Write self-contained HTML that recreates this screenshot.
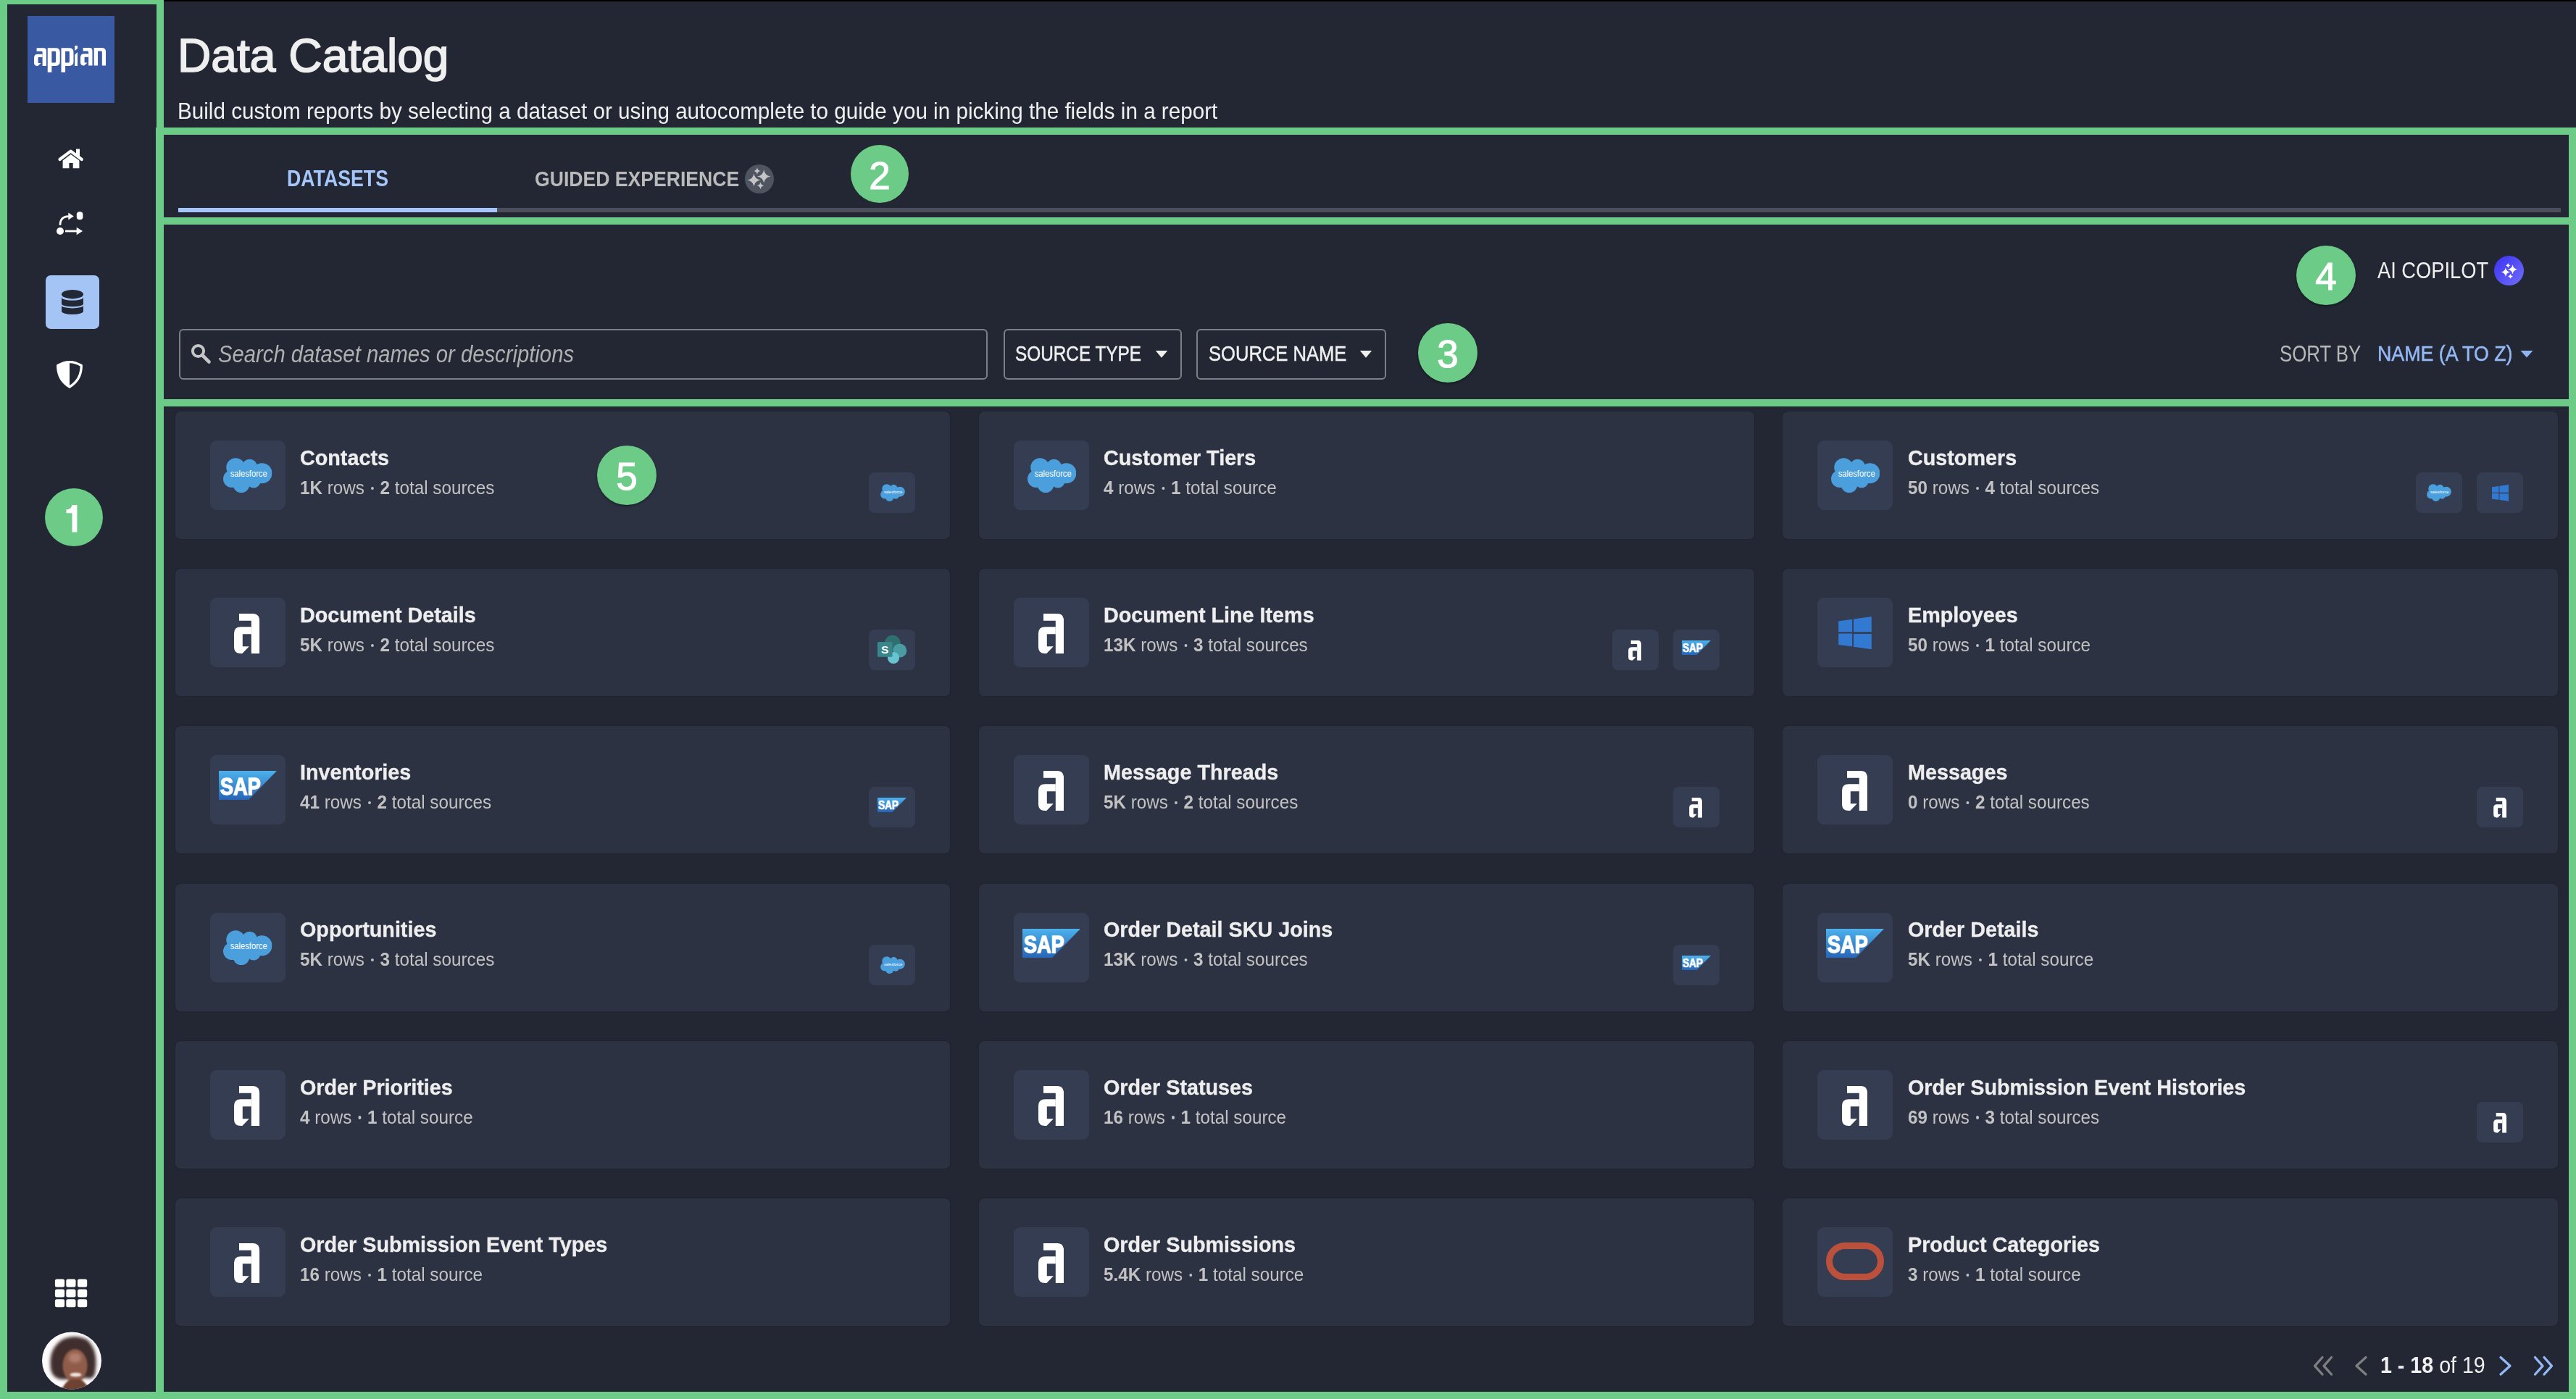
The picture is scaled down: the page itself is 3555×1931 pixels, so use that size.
<!DOCTYPE html>
<html><head><meta charset="utf-8">
<style>
*{margin:0;padding:0;box-sizing:border-box}
html,body{width:3555px;height:1931px;overflow:hidden;background:#222733;font-family:"Liberation Sans",sans-serif}
.a{position:absolute}
.g{position:absolute;background:#6ccb86}
.circ{position:absolute;border-radius:50%;background:#6ccb86;color:#fff;font-size:53px;text-align:center;box-shadow:0 2px 3px rgba(0,0,0,.35);-webkit-text-stroke:1.1px #fff}
.card{position:absolute;width:1069.8px;height:176px;background:#2d3243;border-radius:7px;box-shadow:0 0 1.5px rgba(0,0,0,.4)}
.ib{position:absolute;left:48px;top:40px;width:104px;height:96px;background:#343d52;border-radius:9px}
.mb{position:absolute;top:84px;width:64px;height:56px;background:#343d52;border-radius:8px}
.ct{position:absolute;left:172.3px;top:48.74px;font-size:30.2px;font-weight:700;color:#eeeeee;white-space:nowrap;line-height:1;transform:scaleX(0.952);transform-origin:0 0;-webkit-text-stroke:0.35px #eeeeee}
.cs{position:absolute;left:172.3px;top:92.74px;font-size:25px;color:#c2c2c2;white-space:nowrap;line-height:1;transform:scaleX(0.97);transform-origin:0 0}
.cs b{font-weight:700}
.dot{display:inline-block;width:4.2px;height:4.2px;border-radius:50%;background:#c2c2c2;margin:0 8.9px 0 9.2px;vertical-align:6px}
.txt{position:absolute;white-space:nowrap;line-height:1}
</style></head><body>

<svg width="0" height="0" style="position:absolute">
<defs>
<linearGradient id="sapg" x1="0" y1="0" x2="0" y2="1"><stop offset="0" stop-color="#4db1ec"/><stop offset="1" stop-color="#2765b6"/></linearGradient>
<symbol id="appa" viewBox="0 0 35.3 54.9">
<path fill="#fff" d="M7,0 L26.3,0 Q35.3,0 35.3,11.2 L35.3,54.9 L23.8,54.9 L23.8,9.7 L7,9.7 Z"/>
<path fill="#fff" d="M23.8,18.2 L9.3,18.2 Q0,18.2 0,27.2 L0,46.2 Q0,54.9 9.3,54.9 L11.3,54.9 L20.8,45.2 L11.8,45.2 L11.8,28.2 L23.8,28.2 Z"/>
</symbol>
<symbol id="sf" viewBox="9 12 67.5 48">
<g fill="#4a9fdc">
<circle cx="26.25" cy="25.25" r="13"/>
<circle cx="45.5" cy="24.2" r="10.5"/>
<circle cx="62.5" cy="33.25" r="14"/>
<circle cx="34" cy="48.5" r="11.5"/>
<circle cx="21" cy="41" r="12"/>
<circle cx="51" cy="44" r="9.5"/>
<rect x="20" y="24" width="40" height="23"/>
</g>
<text x="18.7" y="38" font-family="Liberation Sans" font-size="12.5" fill="#fff" textLength="51" lengthAdjust="spacingAndGlyphs">salesforce</text>
</symbol>
<symbol id="sap" viewBox="0 0 80 40">
<path fill="url(#sapg)" d="M0,0 L80,0 L41,40 L0,40 Z"/>
<text x="1.8" y="32.5" font-family="Liberation Sans" font-weight="700" font-size="34" fill="#fff" stroke="#fff" stroke-width="1.3" textLength="56" lengthAdjust="spacingAndGlyphs">SAP</text>
</symbol>
<symbol id="win" viewBox="0 0 46 46">
<g fill="#3279d2">
<path d="M0,6.4 L19.1,3.8 L19.1,21.5 L0,21.5 Z"/>
<path d="M21,3.5 L46,0 L46,21.5 L21,21.5 Z"/>
<path d="M0,23.7 L19.1,23.7 L19.1,41.6 L0,39.4 Z"/>
<path d="M21,24.3 L46,24.3 L46,45.6 L21,42.1 Z"/>
</g>
</symbol>
<symbol id="ora" viewBox="0 0 80 52">
<rect x="4.5" y="4.5" width="71" height="43" rx="21.5" ry="21.5" fill="none" stroke="#bb513d" stroke-width="9"/>
</symbol>
<symbol id="shp" viewBox="0 0 64 56">
<circle cx="32.7" cy="18.7" r="10.9" fill="#2e6f70"/>
<circle cx="42.7" cy="29" r="9.6" fill="#4a9ba2"/>
<circle cx="34" cy="39" r="8.1" fill="#66c5d0"/>
<rect x="11.9" y="17" width="20.6" height="20.8" rx="1.5" fill="#3a8589"/>
<text x="22.1" y="33.2" text-anchor="middle" font-family="Liberation Sans" font-weight="700" font-size="15.5" fill="#fff">S</text>
</symbol>
</defs></svg>


<!-- top black line -->
<div class="a" style="left:226px;top:0;width:3329px;height:2px;background:#000"></div>

<!-- sidebar -->
<div class="a" style="left:10px;top:6px;width:206px;height:1915px;background:#222733"></div>
<div class="a" style="left:38px;top:22px;width:120px;height:120px;background:#3a59a3"></div>

<div class="a" style="left:63px;top:380px;width:74px;height:74px;background:#a4c4f6;border-radius:7px"></div>
<!-- appian logo text -->
<svg class="a" style="left:47px;top:63px;width:60px;height:37px" viewBox="0 0 1344 828"><g fill="#fff" transform="translate(0,0)">
 <g transform="translate(0,75)"><path d="M80,0 L300,0 Q380,0 380,90 L380,550 L260,550 L260,130 Q260,100 230,100 L80,100 Z"/><path d="M260,185 L110,185 Q0,185 0,300 L0,450 Q0,550 100,550 L120,550 L215,460 L140,460 Q125,460 125,440 L125,300 Q125,285 140,285 L260,285 Z"/></g>
 <g transform="translate(420,75)"><path fill-rule="evenodd" d="M0,0 L250,0 Q380,0 380,130 L380,420 Q380,550 250,550 L125,550 L125,750 L0,750 Z M125,100 L230,100 Q255,100 255,125 L255,425 Q255,450 230,450 L125,450 Z"/></g>
 <g transform="translate(840,75)"><path fill-rule="evenodd" d="M0,0 L250,0 Q380,0 380,130 L380,420 Q380,550 250,550 L125,550 L125,750 L0,750 Z M125,100 L230,100 Q255,100 255,125 L255,425 Q255,450 230,450 L125,450 Z"/></g>
 <g transform="translate(1260,0)"><path d="M0,0 L130,0 L130,55 L0,155 Z"/><path d="M0,280 L130,160 L130,625 L0,625 Z"/></g>
</g></svg>
<svg class="a" style="left:110.8px;top:66.4px;width:35.2px;height:24.6px" viewBox="0 0 790 550"><g fill="#fff">
 <path d="M80,0 L290,0 Q370,0 370,90 L370,550 L250,550 L250,130 Q250,100 220,100 L80,100 Z"/><path d="M250,185 L110,185 Q0,185 0,300 L0,450 Q0,550 100,550 L120,550 L215,460 L140,460 Q125,460 125,440 L125,300 Q125,285 140,285 L250,285 Z"/>
 <path d="M420,0 L660,0 Q790,0 790,130 L790,550 L670,550 L670,125 Q670,100 645,100 L540,100 L540,550 L420,550 Z"/>
</g></svg>
<!-- home -->
<svg class="a" style="left:78px;top:203px;width:40px;height:32px" viewBox="78 203 40 32">
 <path d="M82.5,220 L97.6,208.6 L112.8,220" fill="none" stroke="#fff" stroke-width="4.2" stroke-linecap="round" stroke-linejoin="round"/>
 <rect x="105" y="205.6" width="5" height="9.5" fill="#fff"/>
 <path d="M86.6,221.5 L97.7,213 L109.4,221.5 L109.4,232.3 L100.7,232.3 L100.7,225 L95.4,225 L95.4,232.3 L86.6,232.3 Z" fill="#fff"/>
</svg>
<!-- route -->
<svg class="a" style="left:76px;top:290px;width:42px;height:37px" viewBox="76 290 42 37">
 <circle cx="83" cy="319" r="5" fill="#fff"/>
 <path d="M90,319 L108,319" stroke="#fff" stroke-width="2.8"/>
 <path d="M105.7,313.8 L114,319 L105.7,324.2 Z" fill="#fff"/>
 <rect x="105.8" y="292.2" width="8.6" height="11" rx="4" fill="#fff"/>
 <path d="M83,310.7 Q83,298.6 95,298.6" fill="none" stroke="#fff" stroke-width="2.7"/>
 <path d="M94.3,293.6 L101.8,298.6 L94.3,303.6 Z" fill="#fff"/>
</svg>
<!-- database -->
<svg class="a" style="left:83px;top:398px;width:34px;height:38px" viewBox="83 398 34 38">
 <ellipse cx="100" cy="406.2" rx="15" ry="6.2" fill="#232836"/>
 <path d="M85,410.5 A15,4.3 0 0 0 115,410.5 L115,419.6 A15,3.6 0 0 1 85,419.6 Z" fill="#232836"/>
 <path d="M85,421.8 A15,3.6 0 0 0 115,421.8 L115,429.4 A15,4.6 0 0 1 85,429.4 Z" fill="#232836"/>
</svg>
<!-- shield -->
<svg class="a" style="left:76px;top:496px;width:40px;height:42px" viewBox="76 496 40 42">
 <path d="M79.8,504.5 Q88,499.5 96,499.6 Q104,499.5 112.2,504.5 Q112.5,524 96,534 Q79.5,524 79.8,504.5 Z" fill="none" stroke="#fff" stroke-width="3.4" stroke-linejoin="round"/>
 <path d="M79.8,504.5 Q88,499.5 96,499.6 L96,534 Q79.5,524 79.8,504.5 Z" fill="#fff"/>
</svg>
<!-- grid -->
<svg class="a" style="left:75px;top:1764px;width:46px;height:41px" viewBox="75 1764 46 41"><g fill="#fff">
 <rect x="75.9" y="1765.5" width="13.2" height="11" rx="2.5"/><rect x="91.3" y="1765.5" width="13.2" height="11" rx="2.5"/><rect x="107" y="1765.5" width="13.2" height="11" rx="2.5"/>
 <rect x="75.9" y="1779.6" width="13.2" height="11" rx="2.5"/><rect x="91.3" y="1779.6" width="13.2" height="11" rx="2.5"/><rect x="107" y="1779.6" width="13.2" height="11" rx="2.5"/>
 <rect x="75.9" y="1793.3" width="13.2" height="11" rx="2.5"/><rect x="91.3" y="1793.3" width="13.2" height="11" rx="2.5"/><rect x="107" y="1793.3" width="13.2" height="11" rx="2.5"/>
</g></svg>
<!-- avatar -->
<svg class="a" style="left:58px;top:1837.5px;width:82px;height:80px" viewBox="0 0 82 80">
 <defs><clipPath id="avc"><ellipse cx="41" cy="40" rx="41" ry="39.6"/></clipPath>
 <filter id="avb" x="-30%" y="-30%" width="160%" height="160%"><feGaussianBlur stdDeviation="2"/></filter>
 <filter id="avb2" x="-30%" y="-30%" width="160%" height="160%"><feGaussianBlur stdDeviation="1"/></filter></defs>
 <ellipse cx="41" cy="40" rx="41" ry="39.6" fill="#fcfafa"/>
 <g clip-path="url(#avc)">
  <path d="M12,52 Q8,24 28,11 Q45,3 62,11 Q79,26 73,58 Q70,67 62,64 L30,66 Q15,66 12,52 Z" fill="#3f2f2f" filter="url(#avb)"/>
  <ellipse cx="45.5" cy="47" rx="17" ry="23" fill="#8f5c49" filter="url(#avb2)"/>
  <ellipse cx="45.5" cy="36" rx="9" ry="7" fill="#b07e70" filter="url(#avb)"/>
  <path d="M26,82 Q30,72 38,66 L54,66 Q62,72 66,82 Z" fill="#6e4332" filter="url(#avb2)"/>
  <ellipse cx="46.5" cy="59.5" rx="8" ry="2.8" fill="#efe3df" filter="url(#avb2)"/>
 </g>
</svg>

<!-- header -->
<div class="txt" style="left:245.03px;top:44.73px;font-size:64.7px;font-weight:400;font-style:normal;color:#efefef;transform:scaleX(0.9919);transform-origin:0 0;-webkit-text-stroke:1.6px #efefef">Data Catalog</div>
<div class="txt" style="left:244.69px;top:138.07px;font-size:31.1px;font-weight:400;font-style:normal;color:#f0f0f0;transform:scaleX(0.9534);transform-origin:0 0;">Build custom reports by selecting a dataset or using autocomplete to guide you in picking the fields in a report</div>
<div class="txt" style="left:396.27px;top:232.23px;font-size:30.8px;font-weight:700;font-style:normal;color:#a4c6fa;transform:scaleX(0.8671);transform-origin:0 0;">DATASETS</div>
<div class="txt" style="left:738.10px;top:231.96px;font-size:29.7px;font-weight:700;font-style:normal;color:#bababa;transform:scaleX(0.8958);transform-origin:0 0;">GUIDED EXPERIENCE</div>
<div class="txt" style="left:301.09px;top:472.66px;font-size:32.3px;font-weight:400;font-style:italic;color:#b0b0b0;transform:scaleX(0.9057);transform-origin:0 0;">Search dataset names or descriptions</div>
<div class="txt" style="left:1401.18px;top:473.26px;font-size:29.7px;font-weight:400;font-style:normal;color:#efefef;transform:scaleX(0.8199);transform-origin:0 0;-webkit-text-stroke:0.5px #efefef">SOURCE TYPE</div>
<div class="txt" style="left:1667.54px;top:473.26px;font-size:29.7px;font-weight:400;font-style:normal;color:#efefef;transform:scaleX(0.8612);transform-origin:0 0;-webkit-text-stroke:0.5px #efefef">SOURCE NAME</div>
<div class="txt" style="left:3281.00px;top:358.18px;font-size:30.5px;font-weight:400;font-style:normal;color:#f0f0f0;transform:scaleX(0.8947);transform-origin:0 0;">AI COPILOT</div>
<div class="txt" style="left:3145.61px;top:472.88px;font-size:30.5px;font-weight:400;font-style:normal;color:#b8b8b8;transform:scaleX(0.8453);transform-origin:0 0;">SORT BY</div>
<div class="txt" style="left:3280.65px;top:473.75px;font-size:29px;font-weight:400;font-style:normal;color:#94b8f4;transform:scaleX(0.9236);transform-origin:0 0;-webkit-text-stroke:0.5px #94b8f4">NAME (A TO Z)</div>
<div class="txt" style="left:3285.17px;top:1869.09px;font-size:31.2px;font-weight:400;font-style:normal;color:#f0f0f0;transform:scaleX(0.9174);transform-origin:0 0;"><b>1 - 18</b> of 19</div>

<!-- tabs -->
<svg class="a" style="left:1028px;top:227px;width:40px;height:40px" viewBox="0 0 40 40"><circle cx="20" cy="20" r="20" fill="#4f5461"/><g fill="#c4c4c4"><path d="M16.90,4.30 Q17.57,8.43 21.70,9.10 Q17.57,9.77 16.90,13.90 Q16.23,9.77 12.10,9.10 Q16.23,8.43 16.90,4.30 Z"/><path d="M26.20,7.20 Q27.49,15.11 35.40,16.40 Q27.49,17.69 26.20,25.60 Q24.91,17.69 17.00,16.40 Q24.91,15.11 26.20,7.20 Z"/><path d="M12.40,12.60 Q13.66,20.34 21.40,21.60 Q13.66,22.86 12.40,30.60 Q11.14,22.86 3.40,21.60 Q11.14,20.34 12.40,12.60 Z"/><path d="M21.50,24.30 Q22.20,28.60 26.50,29.30 Q22.20,30.00 21.50,34.30 Q20.80,30.00 16.50,29.30 Q20.80,28.60 21.50,24.30 Z"/></g></svg>
<div class="a" style="left:686px;top:287px;width:2848px;height:6px;background:#4a4f5b"></div>
<div class="a" style="left:246px;top:287px;width:440px;height:6px;background:#a4c6fa"></div>

<!-- search row -->
<div class="a" style="left:247px;top:454px;width:1116px;height:70px;border:2px solid #7c7f86;border-radius:6px"></div>
<svg class="a" style="left:262px;top:473px;width:32px;height:30px" viewBox="262 473 32 30"><circle cx="273.5" cy="484.5" r="7.6" fill="none" stroke="#c4c4c4" stroke-width="4"/><path d="M279,490 L288.5,499.5" stroke="#c4c4c4" stroke-width="4.6" stroke-linecap="round"/></svg>
<div class="a" style="left:1385px;top:454px;width:246px;height:70px;border:2px solid #7c7f86;border-radius:6px"></div>
<div class="a" style="left:1651px;top:454px;width:262px;height:70px;border:2px solid #7c7f86;border-radius:6px"></div>

<svg class="a" style="left:3442px;top:353px;width:41px;height:41px" viewBox="0 0 41 41"><defs><linearGradient id="pg" x1="0" y1="0" x2="1" y2="1"><stop offset="0" stop-color="#3a30f4"/><stop offset="1" stop-color="#716ff8"/></linearGradient></defs><circle cx="20.5" cy="20.5" r="20.5" fill="url(#pg)"/><g fill="#fff"><path d="M19.20,9.70 Q19.70,12.80 22.80,13.30 Q19.70,13.80 19.20,16.90 Q18.70,13.80 15.60,13.30 Q18.70,12.80 19.20,9.70 Z"/><path d="M25.50,12.30 Q26.42,17.98 32.10,18.90 Q26.42,19.82 25.50,25.50 Q24.58,19.82 18.90,18.90 Q24.58,17.98 25.50,12.30 Z"/><path d="M15.90,16.20 Q16.80,21.70 22.30,22.60 Q16.80,23.50 15.90,29.00 Q15.00,23.50 9.50,22.60 Q15.00,21.70 15.90,16.20 Z"/><path d="M22.50,24.80 Q23.00,27.90 26.10,28.40 Q23.00,28.90 22.50,32.00 Q22.00,28.90 18.90,28.40 Q22.00,27.90 22.50,24.80 Z"/></g></svg>

<svg class="a" style="left:1594px;top:484px;width:18px;height:10px" viewBox="0 0 18 10"><path d="M0.8,0 L17.2,0 L9,9.8 Z" fill="#efefef"/></svg>
<svg class="a" style="left:1876px;top:484px;width:18px;height:10px" viewBox="0 0 18 10"><path d="M0.8,0 L17.2,0 L9,9.8 Z" fill="#efefef"/></svg>
<svg class="a" style="left:3478px;top:484px;width:18px;height:10px" viewBox="0 0 18 10"><path d="M0.5,0 L17.5,0 L9,9.5 Z" fill="#90b4f2"/></svg>
<!-- cards -->
<div class="card" style="left:241.7px;top:568px"><div class="ib"><svg class="a" style="left:18.7px;top:24px;width:67.5px;height:48px" viewBox="0 0 67.5 48" preserveAspectRatio="none"><use href="#sf" x="0" y="0" width="67.5" height="48"/></svg></div><div class="ct">Contacts</div><div class="cs"><b>1K</b> rows<span class="dot"></span><b>2</b> total sources</div><div class="mb" style="left:957.8px"><svg class="a" style="left:15.3px;top:16px;width:34px;height:24px" viewBox="0 0 34 24" preserveAspectRatio="none"><use href="#sf" x="0" y="0" width="34" height="24"/></svg></div></div>
<div class="card" style="left:1351.0px;top:568px"><div class="ib"><svg class="a" style="left:18.7px;top:24px;width:67.5px;height:48px" viewBox="0 0 67.5 48" preserveAspectRatio="none"><use href="#sf" x="0" y="0" width="67.5" height="48"/></svg></div><div class="ct">Customer Tiers</div><div class="cs"><b>4</b> rows<span class="dot"></span><b>1</b> total source</div></div>
<div class="card" style="left:2460.3px;top:568px"><div class="ib"><svg class="a" style="left:18.7px;top:24px;width:67.5px;height:48px" viewBox="0 0 67.5 48" preserveAspectRatio="none"><use href="#sf" x="0" y="0" width="67.5" height="48"/></svg></div><div class="ct">Customers</div><div class="cs"><b>50</b> rows<span class="dot"></span><b>4</b> total sources</div><div class="mb" style="left:957.8px"><svg class="a" style="left:20.5px;top:16.5px;width:23px;height:23px" viewBox="0 0 23 23" preserveAspectRatio="none"><use href="#win" x="0" y="0" width="23" height="23"/></svg></div><div class="mb" style="left:873.8px"><svg class="a" style="left:15.3px;top:16px;width:34px;height:24px" viewBox="0 0 34 24" preserveAspectRatio="none"><use href="#sf" x="0" y="0" width="34" height="24"/></svg></div></div>
<div class="card" style="left:241.7px;top:785.2px"><div class="ib"><svg class="a" style="left:33.7px;top:22px;width:35.3px;height:54.9px" viewBox="0 0 35.3 54.9" preserveAspectRatio="none"><use href="#appa" x="0" y="0" width="35.3" height="54.9"/></svg></div><div class="ct">Document Details</div><div class="cs"><b>5K</b> rows<span class="dot"></span><b>2</b> total sources</div><div class="mb" style="left:957.8px"><svg class="a" style="left:0px;top:0px;width:64px;height:56px" viewBox="0 0 64 56" preserveAspectRatio="none"><use href="#shp" x="0" y="0" width="64" height="56"/></svg></div></div>
<div class="card" style="left:1351.0px;top:785.2px"><div class="ib"><svg class="a" style="left:33.7px;top:22px;width:35.3px;height:54.9px" viewBox="0 0 35.3 54.9" preserveAspectRatio="none"><use href="#appa" x="0" y="0" width="35.3" height="54.9"/></svg></div><div class="ct">Document Line Items</div><div class="cs"><b>13K</b> rows<span class="dot"></span><b>3</b> total sources</div><div class="mb" style="left:957.8px"><svg class="a" style="left:12px;top:15px;width:40px;height:20px" viewBox="0 0 40 20" preserveAspectRatio="none"><use href="#sap" x="0" y="0" width="40" height="20"/></svg></div><div class="mb" style="left:873.8px"><svg class="a" style="left:22.6px;top:15px;width:18.2px;height:27.7px" viewBox="0 0 18.2 27.7" preserveAspectRatio="none"><use href="#appa" x="0" y="0" width="18.2" height="27.7"/></svg></div></div>
<div class="card" style="left:2460.3px;top:785.2px"><div class="ib"><svg class="a" style="left:29px;top:25.6px;width:46px;height:45.6px" viewBox="0 0 46 45.6" preserveAspectRatio="none"><use href="#win" x="0" y="0" width="46" height="45.6"/></svg></div><div class="ct">Employees</div><div class="cs"><b>50</b> rows<span class="dot"></span><b>1</b> total source</div></div>
<div class="card" style="left:241.7px;top:1002.4px"><div class="ib"><svg class="a" style="left:12px;top:22px;width:80px;height:40px" viewBox="0 0 80 40" preserveAspectRatio="none"><use href="#sap" x="0" y="0" width="80" height="40"/></svg></div><div class="ct">Inventories</div><div class="cs"><b>41</b> rows<span class="dot"></span><b>2</b> total sources</div><div class="mb" style="left:957.8px"><svg class="a" style="left:12px;top:15px;width:40px;height:20px" viewBox="0 0 40 20" preserveAspectRatio="none"><use href="#sap" x="0" y="0" width="40" height="20"/></svg></div></div>
<div class="card" style="left:1351.0px;top:1002.4px"><div class="ib"><svg class="a" style="left:33.7px;top:22px;width:35.3px;height:54.9px" viewBox="0 0 35.3 54.9" preserveAspectRatio="none"><use href="#appa" x="0" y="0" width="35.3" height="54.9"/></svg></div><div class="ct">Message Threads</div><div class="cs"><b>5K</b> rows<span class="dot"></span><b>2</b> total sources</div><div class="mb" style="left:957.8px"><svg class="a" style="left:22.6px;top:15px;width:18.2px;height:27.7px" viewBox="0 0 18.2 27.7" preserveAspectRatio="none"><use href="#appa" x="0" y="0" width="18.2" height="27.7"/></svg></div></div>
<div class="card" style="left:2460.3px;top:1002.4px"><div class="ib"><svg class="a" style="left:33.7px;top:22px;width:35.3px;height:54.9px" viewBox="0 0 35.3 54.9" preserveAspectRatio="none"><use href="#appa" x="0" y="0" width="35.3" height="54.9"/></svg></div><div class="ct">Messages</div><div class="cs"><b>0</b> rows<span class="dot"></span><b>2</b> total sources</div><div class="mb" style="left:957.8px"><svg class="a" style="left:22.6px;top:15px;width:18.2px;height:27.7px" viewBox="0 0 18.2 27.7" preserveAspectRatio="none"><use href="#appa" x="0" y="0" width="18.2" height="27.7"/></svg></div></div>
<div class="card" style="left:241.7px;top:1219.7px"><div class="ib"><svg class="a" style="left:18.7px;top:24px;width:67.5px;height:48px" viewBox="0 0 67.5 48" preserveAspectRatio="none"><use href="#sf" x="0" y="0" width="67.5" height="48"/></svg></div><div class="ct">Opportunities</div><div class="cs"><b>5K</b> rows<span class="dot"></span><b>3</b> total sources</div><div class="mb" style="left:957.8px"><svg class="a" style="left:15.3px;top:16px;width:34px;height:24px" viewBox="0 0 34 24" preserveAspectRatio="none"><use href="#sf" x="0" y="0" width="34" height="24"/></svg></div></div>
<div class="card" style="left:1351.0px;top:1219.7px"><div class="ib"><svg class="a" style="left:12px;top:22px;width:80px;height:40px" viewBox="0 0 80 40" preserveAspectRatio="none"><use href="#sap" x="0" y="0" width="80" height="40"/></svg></div><div class="ct">Order Detail SKU Joins</div><div class="cs"><b>13K</b> rows<span class="dot"></span><b>3</b> total sources</div><div class="mb" style="left:957.8px"><svg class="a" style="left:12px;top:15px;width:40px;height:20px" viewBox="0 0 40 20" preserveAspectRatio="none"><use href="#sap" x="0" y="0" width="40" height="20"/></svg></div></div>
<div class="card" style="left:2460.3px;top:1219.7px"><div class="ib"><svg class="a" style="left:12px;top:22px;width:80px;height:40px" viewBox="0 0 80 40" preserveAspectRatio="none"><use href="#sap" x="0" y="0" width="80" height="40"/></svg></div><div class="ct">Order Details</div><div class="cs"><b>5K</b> rows<span class="dot"></span><b>1</b> total source</div></div>
<div class="card" style="left:241.7px;top:1436.9px"><div class="ib"><svg class="a" style="left:33.7px;top:22px;width:35.3px;height:54.9px" viewBox="0 0 35.3 54.9" preserveAspectRatio="none"><use href="#appa" x="0" y="0" width="35.3" height="54.9"/></svg></div><div class="ct">Order Priorities</div><div class="cs"><b>4</b> rows<span class="dot"></span><b>1</b> total source</div></div>
<div class="card" style="left:1351.0px;top:1436.9px"><div class="ib"><svg class="a" style="left:33.7px;top:22px;width:35.3px;height:54.9px" viewBox="0 0 35.3 54.9" preserveAspectRatio="none"><use href="#appa" x="0" y="0" width="35.3" height="54.9"/></svg></div><div class="ct">Order Statuses</div><div class="cs"><b>16</b> rows<span class="dot"></span><b>1</b> total source</div></div>
<div class="card" style="left:2460.3px;top:1436.9px"><div class="ib"><svg class="a" style="left:33.7px;top:22px;width:35.3px;height:54.9px" viewBox="0 0 35.3 54.9" preserveAspectRatio="none"><use href="#appa" x="0" y="0" width="35.3" height="54.9"/></svg></div><div class="ct">Order Submission Event Histories</div><div class="cs"><b>69</b> rows<span class="dot"></span><b>3</b> total sources</div><div class="mb" style="left:957.8px"><svg class="a" style="left:22.6px;top:15px;width:18.2px;height:27.7px" viewBox="0 0 18.2 27.7" preserveAspectRatio="none"><use href="#appa" x="0" y="0" width="18.2" height="27.7"/></svg></div></div>
<div class="card" style="left:241.7px;top:1654.2px"><div class="ib"><svg class="a" style="left:33.7px;top:22px;width:35.3px;height:54.9px" viewBox="0 0 35.3 54.9" preserveAspectRatio="none"><use href="#appa" x="0" y="0" width="35.3" height="54.9"/></svg></div><div class="ct">Order Submission Event Types</div><div class="cs"><b>16</b> rows<span class="dot"></span><b>1</b> total source</div></div>
<div class="card" style="left:1351.0px;top:1654.2px"><div class="ib"><svg class="a" style="left:33.7px;top:22px;width:35.3px;height:54.9px" viewBox="0 0 35.3 54.9" preserveAspectRatio="none"><use href="#appa" x="0" y="0" width="35.3" height="54.9"/></svg></div><div class="ct">Order Submissions</div><div class="cs"><b>5.4K</b> rows<span class="dot"></span><b>1</b> total source</div></div>
<div class="card" style="left:2460.3px;top:1654.2px"><div class="ib"><svg class="a" style="left:12px;top:21px;width:80px;height:52px" viewBox="0 0 80 52" preserveAspectRatio="none"><use href="#ora" x="0" y="0" width="80" height="52"/></svg></div><div class="ct">Product Categories</div><div class="cs"><b>3</b> rows<span class="dot"></span><b>1</b> total source</div></div>

<!-- pagination -->

<svg class="a" style="left:3190px;top:1870px;width:340px;height:32px" viewBox="3190 1870 340 32" fill="none" stroke-linecap="round" stroke-linejoin="round">
 <path d="M3205,1873.5 L3194.5,1885.3 L3205,1897" stroke="#7f7f7f" stroke-width="3.3"/>
 <path d="M3217.5,1873.5 L3207,1885.3 L3217.5,1897" stroke="#7f7f7f" stroke-width="3.3"/>
 <path d="M3265,1873.5 L3252,1885.3 L3265,1897" stroke="#7f7f7f" stroke-width="3.3"/>
 <path d="M3451,1873.5 L3464,1885.3 L3451,1897" stroke="#94b8f5" stroke-width="3.3"/>
 <path d="M3498.5,1873.5 L3509,1885.3 L3498.5,1897" stroke="#94b8f5" stroke-width="3.3"/>
 <path d="M3511,1873.5 L3521.5,1885.3 L3511,1897" stroke="#94b8f5" stroke-width="3.3"/>
</svg>
<!-- annotation boxes -->
<div class="g" style="left:0;top:0;width:226px;height:6px"></div>
<div class="g" style="left:0;top:0;width:10px;height:1931px"></div>
<div class="g" style="left:216px;top:0;width:10px;height:186px"></div>
<div class="g" style="left:215px;top:176px;width:11px;height:1755px"></div>
<div class="g" style="left:0;top:1921px;width:3555px;height:10px"></div>
<div class="g" style="left:215px;top:176px;width:3340px;height:10px"></div>
<div class="g" style="left:215px;top:300px;width:3340px;height:10px"></div>
<div class="g" style="left:215px;top:551px;width:3340px;height:10px"></div>
<div class="g" style="left:3545px;top:176px;width:10px;height:1755px"></div>

<div class="circ" style="left:62px;top:674px;width:80px;height:80px;box-shadow:none"></div>
<svg class="a" style="left:88px;top:694px;width:22px;height:44px" viewBox="88 694 22 44"><path d="M99.5,696.9 L106.4,696.9 L106.4,734.4 L99.5,734.4 L99.5,708.2 L91.5,708.2 L91.5,703.3 Q98.3,703 99.5,696.9 Z" fill="#fff"/></svg>
<div class="circ" style="left:1174px;top:200px;width:80px;height:80px;line-height:85px;box-shadow:none">2</div>
<div class="circ" style="left:1957px;top:446px;width:82px;height:82px;line-height:86px">3</div>
<div class="circ" style="left:3169px;top:339px;width:82px;height:82px;line-height:86px">4</div>
<div class="circ" style="left:824px;top:615px;width:82px;height:82px;line-height:86px">5</div>

</body></html>
